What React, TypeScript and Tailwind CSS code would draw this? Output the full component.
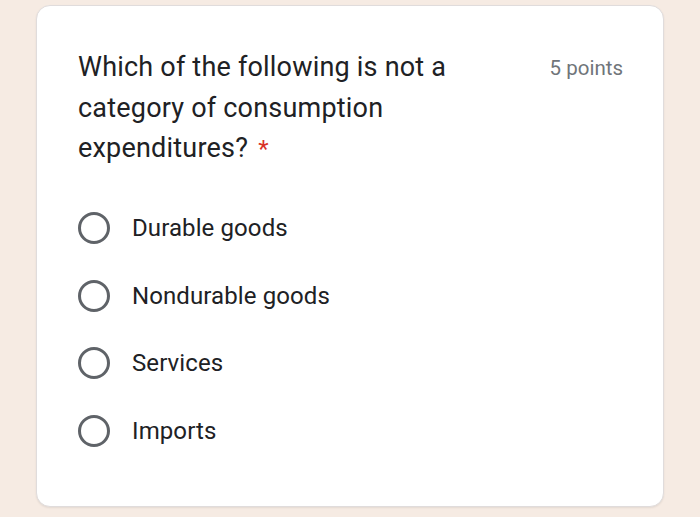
import React from 'react';

const opciones = ['Durable goods', 'Nondurable goods', 'Services', 'Imports'];

const Radio: React.FC = () => (
  <span className="block w-[32px] h-[32px] rounded-full border-[3px] border-[#5f6368] shrink-0"></span>
);

export default function App() {
  return (
    <div
      className="w-[700px] h-[517px] bg-[#f6ebe3] pt-[5px] px-[36px]"
      style={{ fontFamily: 'Roboto, "Noto Sans", sans-serif' }}
    >
      <div className="h-[502px] bg-white rounded-[14px] border border-[#e0dcdc] shadow-[0_1px_2px_rgba(0,0,0,0.08)] pt-[41px] px-[41px]">
        {/* Pregunta */}
        <div className="flex justify-between items-start">
          <div className="w-[420px] text-[27px] leading-[40.5px] tracking-[0.2px] text-[#202124]">
            Which of the following is not a category of consumption expenditures?
            <span className="text-[#d93025] ml-[10px] text-[24px]">*</span>
          </div>
          <div className="text-[20.5px] leading-[40px] text-[#70757a] pt-[1px] -mr-[1px]">5 points</div>
        </div>

        {/* Opciones */}
        <div className="mt-[25px] flex flex-col">
          {opciones.map((op) => (
            <div key={op} className="h-[67.6px] flex items-center">
              <Radio />
              <span className="ml-[22px] text-[24px] tracking-[0.1px] text-[#202124]">{op}</span>
            </div>
          ))}
        </div>
      </div>
    </div>
  );
}
